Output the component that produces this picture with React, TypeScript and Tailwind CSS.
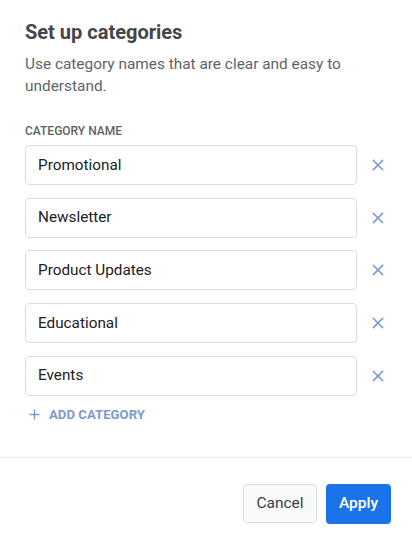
import React from "react";

const categories = ["Promotional", "Newsletter", "Product Updates", "Educational", "Events"];

function XIcon() {
  return (
    <svg width="12" height="12" viewBox="0 0 12 12" fill="none" stroke="currentColor" strokeWidth="1.6" strokeLinecap="square">
      <path d="M1.5 1.5 L10.5 10.5 M10.5 1.5 L1.5 10.5" />
    </svg>
  );
}

function PlusIcon() {
  return (
    <svg width="11" height="11" viewBox="0 0 11 11" fill="none" stroke="currentColor" strokeWidth="1.5">
      <path d="M5.5 0.5 V10.5 M0.5 5.5 H10.5" />
    </svg>
  );
}

export default function App() {
  return (
    <div className="w-[412px] h-[539px] bg-white flex flex-col" style={{ fontFamily: "Roboto, 'Liberation Sans', sans-serif" }}>
      <div className="px-[25px] pt-[19px]">
        <h1 className="text-[20px] leading-[26px] font-bold text-[#43464b]">Set up categories</h1>
        <p className="mt-[8px] text-[15.4px] leading-[22px] text-[#5f6368]">
          Use category names that are clear and easy to understand.
        </p>
        <div className="mt-[27px] text-[12px] leading-[14px] font-medium text-[#5f6368] uppercase">Category name</div>
        <div className="mt-[7px] flex flex-col gap-[12.7px]">
          {categories.map((c) => (
            <div key={c} className="flex items-center">
              <div className="w-[332px] h-[40px] border border-[#dadce0] rounded-[4px] flex items-center px-[12px] text-[15.3px] text-[#202124]">
                {c}
              </div>
              <button className="ml-[15px] w-[12px] h-[12px] text-[#7b9ccb] flex items-center justify-center">
                <XIcon />
              </button>
            </div>
          ))}
        </div>
        <button className="mt-[12px] ml-[4px] flex items-center gap-[9px] text-[#7b9ccb] text-[13.2px] font-bold uppercase leading-[14px]">
          <PlusIcon />
          <span>Add category</span>
        </button>
      </div>
      <div className="mt-[35px] border-t border-[#e8eaed]" />
      <div className="flex justify-end gap-[9px] px-[21px] pt-[26px]">
        <button className="h-[39px] w-[74px] rounded-[4px] border border-[#dadce0] bg-[#f8f9fa] text-[15.5px] font-normal text-[#3c4043]">
          Cancel
        </button>
        <button className="h-[40px] w-[65px] rounded-[4px] bg-[#1a73e8] text-[15.5px] font-medium text-white">
          Apply
        </button>
      </div>
    </div>
  );
}
